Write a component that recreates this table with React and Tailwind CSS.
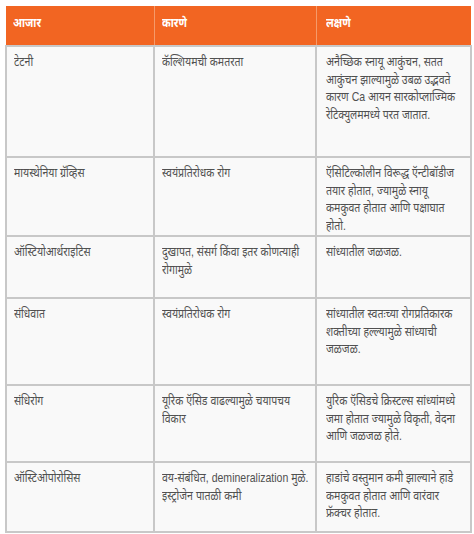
import React from 'react';

// each cell is a list of lines, broken where the reference breaks them
const rows = [
  {
    h: 'h-[111px]',
    cells: [
      ['टेटनी'],
      ['कॅल्शियमची कमतरता'],
      [
        'अनैच्छिक स्नायू आकुंचन, सतत',
        'आकुंचन झाल्यामुळे उबळ उद्भवते',
        'कारण Ca आयन सारकोप्लाज्मिक',
        'रेटिक्युलममध्ये परत जातात.',
      ],
    ],
  },
  {
    h: 'h-[79px]',
    cells: [
      ['मायस्थेनिया ग्रॅव्हिस'],
      ['स्वयंप्रतिरोधक रोग'],
      ['ऍसिटिल्कोलीन विरूद्ध ऍन्टीबॉडीज', 'तयार होतात, ज्यामुळे स्नायू', 'कमकुवत होतात आणि पक्षाघात', 'होतो.'],
    ],
  },
  {
    h: 'h-[62px]',
    cells: [['ऑस्टियोआर्थराइटिस'], ['दुखापत, संसर्ग किंवा इतर कोणत्याही', 'रोगामुळे'], ['सांध्यातील जळजळ.']],
  },
  {
    h: 'h-[87px]',
    cells: [
      ['संधिवात'],
      ['स्वयंप्रतिरोधक रोग'],
      ['सांध्यातील स्वतःच्या रोगप्रतिकारक', 'शक्तीच्या हल्ल्यामुळे सांध्याची', 'जळजळ.'],
    ],
  },
  {
    h: 'h-[77px]',
    cells: [
      ['संधिरोग'],
      ['यूरिक ऍसिड वाढल्यामुळे चयापचय', 'विकार'],
      ['युरिक ऍसिडचे क्रिस्टल्स सांध्यांमध्ये', 'जमा होतात ज्यामुळे विकृती, वेदना', 'आणि जळजळ होते.'],
    ],
  },
  {
    h: 'h-[70px]',
    cells: [
      ['ऑस्टिओपोरोसिस'],
      ['वय-संबंधित, demineralization मुळे.', 'इस्ट्रोजेन पातळी कमी'],
      ['हाडांचे वस्तुमान कमी झाल्याने हाडे', 'कमकुवत होतात आणि वारंवार', 'फ्रॅक्चर होतात.'],
    ],
  },
];

export default function App() {
  return (
    <div className="w-[474px] h-[534px] bg-white pt-[6px] pl-[5px]">
      <table
        className="w-[465px] table-fixed border-collapse text-[13px] leading-[17.5px] text-[#505050]"
        style={{ fontFamily: '"Liberation Sans", "Noto Sans", sans-serif' }}
      >
        <colgroup>
          <col className="w-[148px]" />
          <col className="w-[162px]" />
          <col className="w-[155px]" />
        </colgroup>
        <thead>
          <tr className="h-[40px] bg-[#f26522] text-white font-bold">
            <th className="text-left align-top pt-[8px] pl-[7px] border-r border-[#f59a6a]">
              <div className="origin-top-left scale-x-[0.81] whitespace-nowrap">आजार</div>
            </th>
            <th className="text-left align-top pt-[8px] pl-[7px] border-r border-[#f59a6a]">
              <div className="origin-top-left scale-x-[0.81] whitespace-nowrap">कारणे</div>
            </th>
            <th className="text-left align-top pt-[8px] pl-[9px]">
              <div className="origin-top-left scale-x-[0.81] whitespace-nowrap">लक्षणे</div>
            </th>
          </tr>
        </thead>
        <tbody className="bg-[#f9f9f9]">
          {rows.map((r, i) => (
            <tr key={i} className={r.h}>
              {r.cells.map((lines, j) => (
                <td
                  key={j}
                  className={`align-top border-2 border-[#c8c8c8] pt-[6px] pr-[4px] ${j === 2 ? 'pl-[9px]' : 'pl-[7px]'}`}
                >
                  <div className="origin-top-left scale-x-[0.81] whitespace-nowrap">
                    {lines.map((l, k) => (
                      <div key={k}>{l}</div>
                    ))}
                  </div>
                </td>
              ))}
            </tr>
          ))}
        </tbody>
      </table>
    </div>
  );
}
